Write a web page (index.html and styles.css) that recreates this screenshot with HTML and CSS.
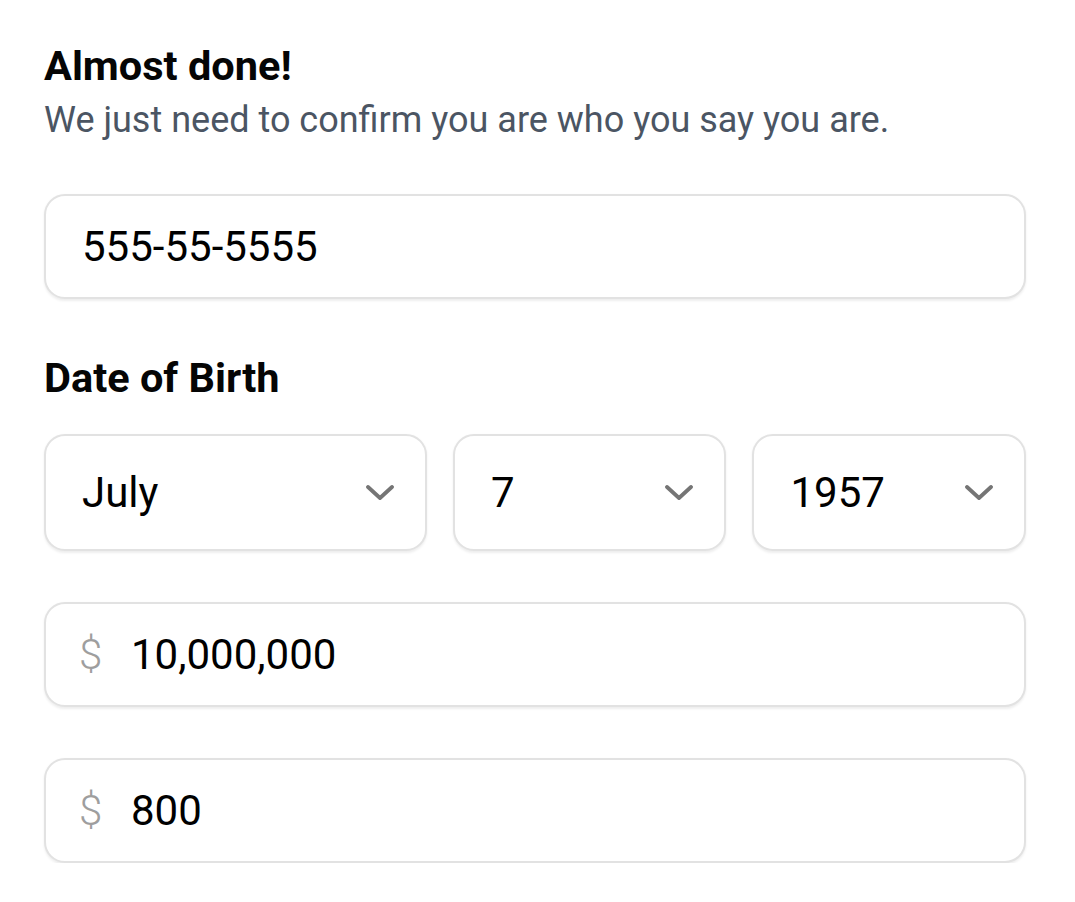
FILE: index.html
```html
<!DOCTYPE html>
<html lang="en">
<head>
<meta charset="utf-8">
<title>Almost done</title>
<link rel="stylesheet" href="styles.css">
</head>
<body>
<main class="page">
  <h1 class="title">Almost done!</h1>
  <p class="subtitle">We just need to confirm you are who you say you are.</p>

  <div class="field field-ssn">
    <span class="value">555-55-5555</span>
  </div>

  <h2 class="label">Date of Birth</h2>
  <div class="dob">
    <div class="select">
      <span class="value">July</span>
      <svg class="chevron" viewBox="0 0 28 16" aria-hidden="true"><path d="M2 2 L14 13 L26 2" /></svg>
    </div>
    <div class="select">
      <span class="value">7</span>
      <svg class="chevron" viewBox="0 0 28 16" aria-hidden="true"><path d="M2 2 L14 13 L26 2" /></svg>
    </div>
    <div class="select">
      <span class="value">1957</span>
      <svg class="chevron" viewBox="0 0 28 16" aria-hidden="true"><path d="M2 2 L14 13 L26 2" /></svg>
    </div>
  </div>

  <div class="field field-money">
    <span class="currency">$</span>
    <span class="value">10,000,000</span>
  </div>

  <div class="field field-money field-last">
    <span class="currency">$</span>
    <span class="value">800</span>
  </div>
</main>
</body>
</html>
```

FILE: styles.css
```css
* {
  box-sizing: border-box;
}

html, body {
  margin: 0;
  padding: 0;
  background: #ffffff;
}

body {
  font-family: Roboto, "Liberation Sans", Arial, sans-serif;
  color: #000000;
}

.page {
  width: 1075px;
  padding: 40px 49px 0 44px;
}

.title {
  margin: 0;
  font-size: 41.5px;
  line-height: 52px;
  font-weight: 700;
  color: #050505;
}

.subtitle {
  margin: 4px 0 0;
  font-size: 36px;
  line-height: 48px;
  font-weight: 400;
  color: #4b5563;
}

.field {
  display: flex;
  align-items: center;
  height: 105px;
  margin-top: 50px;
  padding: 0 36px;
  border: 2.6px solid #e2e2e2;
  border-radius: 21px;
  background: #ffffff;
  box-shadow: 0 1.5px 2.5px rgba(0, 0, 0, 0.07);
}

.value {
  font-size: 42px;
  line-height: 1;
  color: #000000;
}

.label {
  margin: 53px 0 0;
  font-size: 41.5px;
  line-height: 52px;
  font-weight: 700;
  color: #050505;
}

.dob {
  display: grid;
  grid-template-columns: 1.4fr 1fr 1fr;
  gap: 26px;
  margin-top: 30px;
}

.select {
  display: flex;
  align-items: center;
  justify-content: space-between;
  height: 117px;
  padding: 0 31px 0 36px;
  border: 2.6px solid #e2e2e2;
  border-radius: 21px;
  background: #ffffff;
  box-shadow: 0 1.5px 2.5px rgba(0, 0, 0, 0.07);
}

.chevron {
  width: 28px;
  height: 16px;
  fill: none;
  stroke: #757575;
  stroke-width: 3.8;
  stroke-linecap: round;
  stroke-linejoin: round;
}

.field-money {
  margin-top: 51px;
  padding-left: 33px;
}

.currency {
  width: 52px;
  font-size: 42px;
  line-height: 1;
  font-weight: 300;
  color: #9e9e9e;
}
```
